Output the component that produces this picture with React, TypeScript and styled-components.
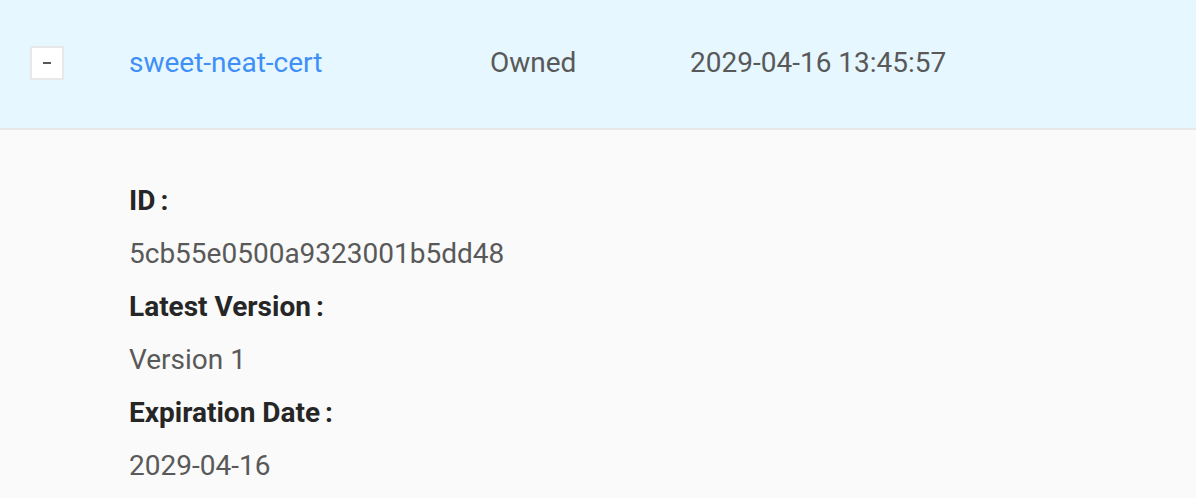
import styled, { createGlobalStyle } from 'styled-components'

const GlobalStyle = createGlobalStyle`
    html, body {
        margin: 0;
        padding: 0;
        background: #fafafa;
        font-family: Roboto, "Liberation Sans", sans-serif;
    }
`

const details = [
    { label: "ID", value: "5cb55e0500a9323001b5dd48" },
    { label: "Latest Version", value: "Version 1" },
    { label: "Expiration Date", value: "2029-04-16" },
]

const App = () => {
    return (
        <>
            <GlobalStyle />
            <Wrap>
                <HeaderRow>
                    <ExpandCell>
                        <ExpandButton aria-label="collapse">
                            <Dash />
                        </ExpandButton>
                    </ExpandCell>
                    <Cell $width={361}>
                        <NameLink href="#">sweet-neat-cert</NameLink>
                    </Cell>
                    <Cell $width={200}>Owned</Cell>
                    <Cell>2029-04-16 13:45:57</Cell>
                </HeaderRow>
                <Expanded>
                    {details.map((item) => (
                        <DetailItem key={item.label}>
                            <Label>
                                {item.label}
                                <Colon>:</Colon>
                            </Label>
                            <Value>{item.value}</Value>
                        </DetailItem>
                    ))}
                </Expanded>
            </Wrap>
        </>
    );
}

export default App;

const Wrap = styled.div`
    width: 1196px;
    height: 498px;
    overflow: hidden;
    background: #fafafa;
    display: flex;
    flex-direction: column;
`

const HeaderRow = styled.div`
    height: 126px;
    padding-bottom: 2px;
    flex-shrink: 0;
    background: #e6f7ff;
    border-bottom: 2px solid #e8e8e8;
    display: flex;
    align-items: center;
    font-size: 28px;
    color: #595959;
`

const ExpandCell = styled.div`
    width: 129px;
    padding-left: 30px;
    box-sizing: border-box;
    display: flex;
    align-items: center;
`

const ExpandButton = styled.button`
    width: 34px;
    height: 34px;
    padding: 0;
    box-sizing: border-box;
    border: 2px solid #e8e8e8;
    background: #fff;
    display: flex;
    align-items: center;
    justify-content: center;
    cursor: pointer;
`

const Dash = styled.span`
    width: 8px;
    height: 2px;
    background: #595959;
`

const Cell = styled.div<{ $width?: number }>`
    width: ${(p) => (p.$width ? `${p.$width}px` : 'auto')};
    flex-shrink: 0;
    line-height: 1;
    white-space: nowrap;
`

const NameLink = styled.a`
    color: #3f8ff7;
    text-decoration: none;
`

const Expanded = styled.div`
    padding: 44px 0 0 129px;
    display: flex;
    flex-direction: column;
`

const DetailItem = styled.div`
    display: flex;
    flex-direction: column;
`

const Label = styled.div`
    font-size: 28px;
    line-height: 53px;
    font-weight: 700;
    color: #262626;
`

const Colon = styled.span`
    margin-left: 5px;
`

const Value = styled.div`
    font-size: 28px;
    line-height: 53px;
    color: #595959;
`
